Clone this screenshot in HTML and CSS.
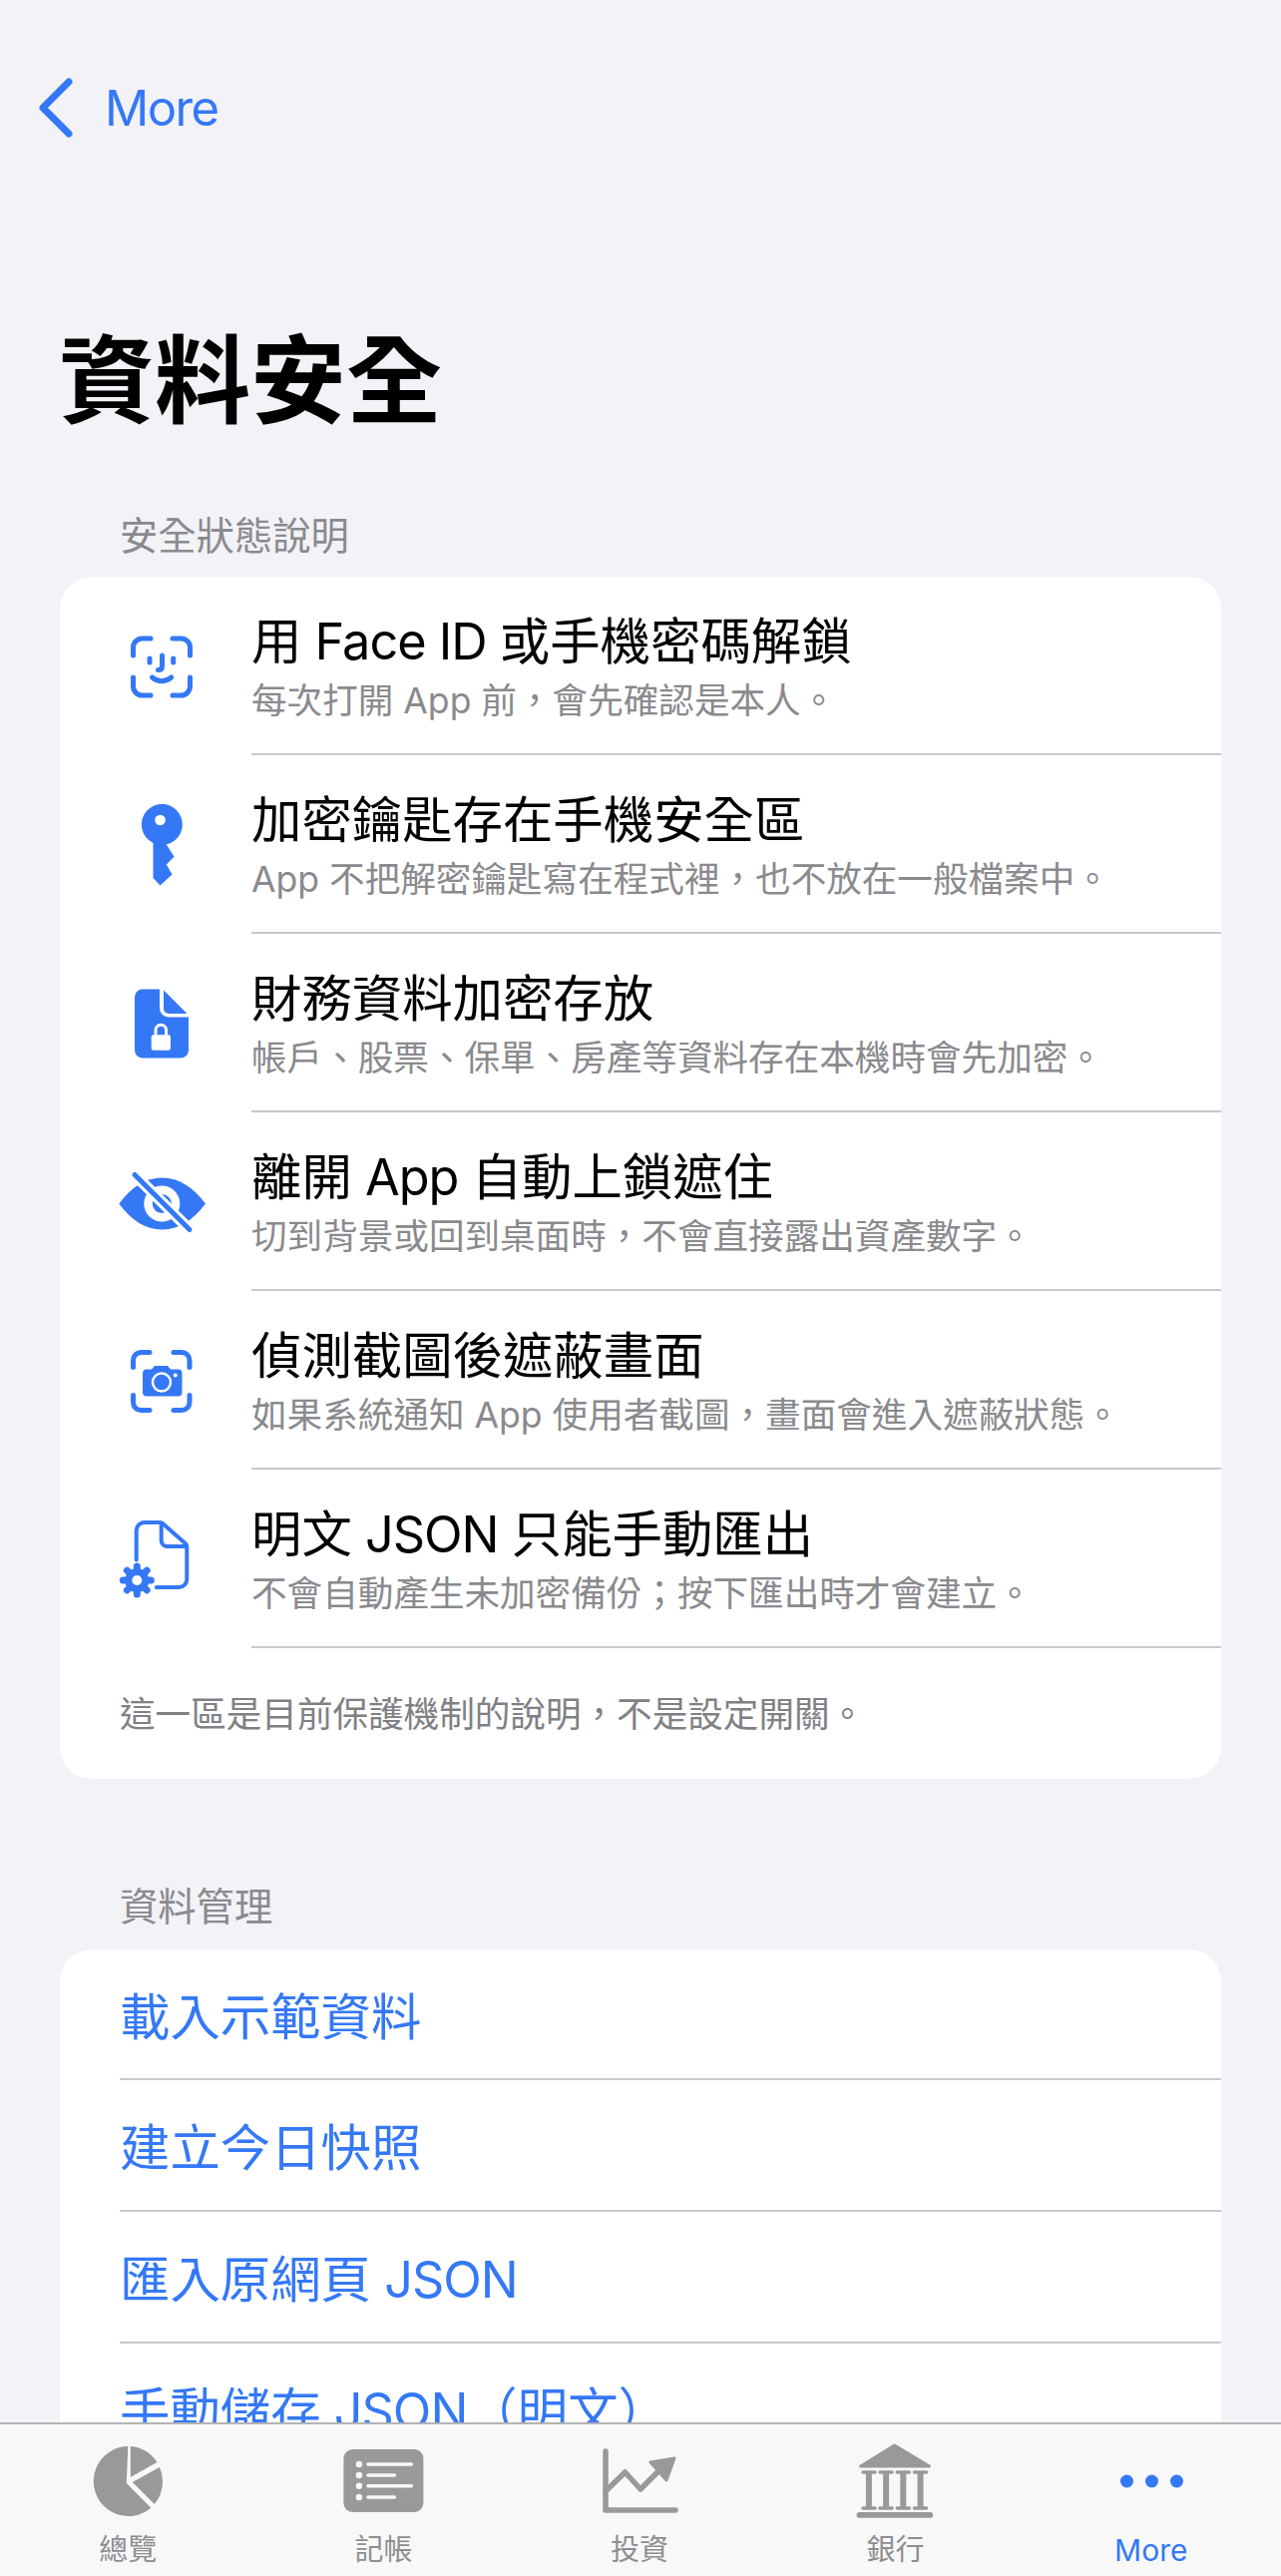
FILE: index.html
```html
<!DOCTYPE html>
<html lang="zh-Hant">
<head>
    <meta charset="UTF-8">
    <meta name="viewport" content="width=device-width, initial-scale=1.0">
    <title>資料安全</title>
    <link rel="stylesheet" href="styles.css">
</head>
<body>
    <main class="content">
        <nav class="nav">
            <svg class="nav-chevron" viewBox="0 0 40 64"><path d="M34 6 L8 32 L34 58"/></svg>
            <span class="nav-back">More</span>
        </nav>

        <h1 class="page-title">資料安全</h1>

        <h2 class="section-title">安全狀態說明</h2>
        <section class="card">
            <div class="status-row">
                <svg class="status-icon" viewBox="0 0 120 120">
                    <g class="line">
                        <path d="M31.5 49 V41 a9 9 0 0 1 9 -9 H49"/>
                        <path d="M71 32 H79.5 a9 9 0 0 1 9 9 V49"/>
                        <path d="M31.5 71 V80 a9 9 0 0 0 9 9 H49"/>
                        <path d="M71 89 H79.5 a9 9 0 0 0 9 -9 V71"/>
                        <path d="M48 52 V56"/>
                        <path d="M71.7 52 V56"/>
                        <path d="M60.5 49 V60 c0 2.6 -1.4 3.6 -4 3.6"/>
                        <path d="M50.5 71 Q60 78.5 69.7 71"/>
                    </g>
                </svg>
                <div class="status-text">
                    <div class="status-name">用<span class="latin"> Face ID </span>或手機密碼解鎖</div>
                    <div class="status-desc">每次打開 App 前，會先確認是本人。</div>
                </div>
            </div>
            <div class="status-row">
                <svg class="status-icon" viewBox="1.5 0 120 120">
                    <path class="solid" d="M53 58 A20.5 20.5 0 1 1 66.3 59.5 L74 71.8 L66.3 79.5 L72 89.5 L60 100.5 L53 93 Z"/>
                    <circle class="hole" cx="60" cy="35" r="5.3"/>
                </svg>
                <div class="status-text">
                    <div class="status-name">加密鑰匙存在手機安全區</div>
                    <div class="status-desc">App 不把解密鑰匙寫在程式裡，也不放在一般檔案中。</div>
                </div>
            </div>
            <div class="status-row">
                <svg class="status-icon" viewBox="0 1.5 120 120">
                    <path class="solid" d="M41 27 H58 V46 a9 9 0 0 0 9 9 H87 V88 a8 8 0 0 1 -8 8 H41 a8 8 0 0 1 -8 -8 V35 a8 8 0 0 1 8 -8 Z"/>
                    <path class="solid" d="M62 28 L85.5 51.5 H67 a5 5 0 0 1 -5 -5 Z"/>
                    <rect class="hole" x="49.7" y="72.7" width="19.3" height="15.6" rx="2"/>
                    <path class="shackle" d="M54 73 V68 a5.3 5.3 0 0 1 10.6 0 V73"/>
                </svg>
                <div class="status-text">
                    <div class="status-name">財務資料加密存放</div>
                    <div class="status-desc">帳戶、股票、保單、房產等資料存在本機時會先加密。</div>
                </div>
            </div>
            <div class="status-row">
                <svg class="status-icon" viewBox="0 1.5 120 120">
                    <path class="solid" d="M17.3 63 C30 46 44 37 60.5 37 C77 37 91 46 104 63 C91 80 77 89 60.5 89 C44 89 30 80 17.3 63 Z"/>
                    <circle class="hole" cx="60.3" cy="63" r="18"/>
                    <circle class="solid" cx="60.3" cy="63" r="9.5"/>
                    <path class="slash-gap" d="M29 30 L92 93"/>
                    <path class="slash" d="M33 34 L88 89"/>
                </svg>
                <div class="status-text">
                    <div class="status-name">離開<span class="latin"> App </span>自動上鎖遮住</div>
                    <div class="status-desc">切到背景或回到桌面時，不會直接露出資產數字。</div>
                </div>
            </div>
            <div class="status-row">
                <svg class="status-icon" viewBox="0 1.5 120 120">
                    <g class="line">
                        <path d="M31.5 48 V41 a8 8 0 0 1 8 -8 H48"/>
                        <path d="M72 33 H80 a8 8 0 0 1 8 8 V48"/>
                        <path d="M31.5 76 V83 a8 8 0 0 0 8 8 H48"/>
                        <path d="M72 91 H80 a8 8 0 0 0 8 -8 V76"/>
                    </g>
                    <path class="solid" d="M45 50 H50 L53 46.5 H66 L69 50 H76.5 a4 4 0 0 1 4 4 V73 a4 4 0 0 1 -4 4 H45 a4 4 0 0 1 -4 -4 V54 a4 4 0 0 1 4 -4 Z"/>
                    <circle class="ring" cx="60" cy="63" r="9"/>
                    <circle class="hole" cx="73.7" cy="56" r="2"/>
                </svg>
                <div class="status-text">
                    <div class="status-name">偵測截圖後遮蔽畫面</div>
                    <div class="status-desc">如果系統通知 App 使用者截圖，畫面會進入遮蔽狀態。</div>
                </div>
            </div>
            <div class="status-row">
                <svg class="status-icon" viewBox="0 0 120 120">
                    <g class="line thin">
                        <path d="M34.7 60.5 V31 a8 8 0 0 1 8 -8 H58 a5 5 0 0 1 3.6 1.5 L83.7 44 a5 5 0 0 1 1.6 3.6 V80 a8 8 0 0 1 -8 8 H54.7"/>
                        <path d="M59.7 24 V41 a6 6 0 0 0 6 6 H85"/>
                    </g>
                    <g class="gear-teeth">
                        <path d="M35.3 67 V95"/>
                        <path d="M21.3 81 H49.3"/>
                        <path d="M25.4 71.1 L45.2 90.9"/>
                        <path d="M25.4 90.9 L45.2 71.1"/>
                    </g>
                    <circle class="solid" cx="35.3" cy="81" r="12"/>
                    <circle class="hole" cx="35.3" cy="81" r="5"/>
                </svg>
                <div class="status-text">
                    <div class="status-name">明文<span class="latin"> JSON </span>只能手動匯出</div>
                    <div class="status-desc">不會自動產生未加密備份；按下匯出時才會建立。</div>
                </div>
            </div>
            <p class="card-note">這一區是目前保護機制的說明，不是設定開關。</p>
        </section>

        <h2 class="section-title section-second">資料管理</h2>
        <section class="card">
            <div class="action-row">載入示範資料</div>
            <div class="action-row">建立今日快照</div>
            <div class="action-row">匯入原網頁<span class="latin"> JSON</span></div>
            <div class="action-row">手動儲存<span class="latin"> JSON</span>（明文）</div>
        </section>
    </main>

    <footer class="tabbar">
        <div class="tab">
            <svg class="tab-icon" viewBox="-10.8 0 100 80">
                <path d="M39.5 5 A35 35 0 1 0 62.5 66.8 L38 42 Z"/>
                <path d="M42 5 A35 35 0 0 1 68.6 21 L42 36 Z"/>
                <path d="M71 26 A35 35 0 0 1 66 63 L44 41 Z"/>
            </svg>
            <span>總覽</span>
        </div>
        <div class="tab">
            <svg class="tab-icon" viewBox="0 0 100 80">
                <rect x="9.4" y="8" width="80" height="63" rx="9"/>
                <g class="tab-list">
                    <path d="M33.9 23 H77.4"/>
                    <path d="M33.9 34 H60.4"/>
                    <path d="M33.9 44.7 H77.4"/>
                    <path d="M33.9 56 H60.4"/>
                </g>
                <g class="tab-dots">
                    <circle cx="24.9" cy="23" r="3.2"/>
                    <circle cx="24.9" cy="34" r="3.2"/>
                    <circle cx="24.9" cy="44.7" r="3.2"/>
                    <circle cx="24.9" cy="56" r="3.2"/>
                </g>
            </svg>
            <span>記帳</span>
        </div>
        <div class="tab">
            <svg class="tab-icon" viewBox="0 0 100 80">
                <path class="tab-line" d="M16 10 V69 H86"/>
                <path class="tab-line" d="M16 50 L35.5 31 L51 48 L70 29"/>
                <path class="tab-arrow" d="M85 17 L61 21 L77 39 Z"/>
            </svg>
            <span>投資</span>
        </div>
        <div class="tab">
            <svg class="tab-icon" viewBox="0 0 100 80">
                <path class="tab-arrow" d="M49.6 4 L15.6 25 H84.6 Z"/>
                <g class="tab-columns">
                    <path d="M23.9 31 V67"/>
                    <path d="M41.1 31 V67"/>
                    <path d="M58.3 31 V67"/>
                    <path d="M75.6 31 V67"/>
                </g>
                <g class="tab-caps">
                    <path d="M18 31 H30"/>
                    <path d="M35 31 H47"/>
                    <path d="M52.3 31 H64.3"/>
                    <path d="M69.6 31 H81.6"/>
                    <path d="M18 67 H30"/>
                    <path d="M35 67 H47"/>
                    <path d="M52.3 67 H64.3"/>
                    <path d="M69.6 67 H81.6"/>
                </g>
                <rect x="11.6" y="71" width="76.6" height="5.7" rx="2.8"/>
            </svg>
            <span>銀行</span>
        </div>
        <div class="tab tab-active">
            <svg class="tab-icon" viewBox="0 0 100 80">
                <circle cx="25.5" cy="40" r="6.5"/>
                <circle cx="50.5" cy="40" r="6.5"/>
                <circle cx="75.5" cy="40" r="6.5"/>
            </svg>
            <span class="tab-more">More</span>
        </div>
    </footer>
</body>
</html>
```

FILE: styles.css
```css
* {
    box-sizing: border-box;
}
body {
    margin: 0;
    height: 2582px;
    display: flex;
    flex-direction: column;
    overflow: hidden;
    background: #f2f2f7;
    color: #000;
    font-family: Inter, "Noto Sans CJK TC", sans-serif;
}
.content {
    flex: 1;
    min-height: 0;
    overflow: hidden;
    padding: 72px 60px 0;
}
.nav {
    display: flex;
    align-items: center;
    gap: 30px;
    height: 72px;
    margin-left: -25px;
    color: #3478f6;
}
.nav-chevron {
    width: 40px;
    height: 64px;
}
.nav-chevron path {
    fill: none;
    stroke: #3478f6;
    stroke-width: 7;
    stroke-linecap: round;
    stroke-linejoin: round;
}
.nav-back {
    font-size: 49px;
    letter-spacing: -1.6px;
}
.page-title {
    margin: 177px 0 71px -1px;
    font-size: 96px;
    line-height: 120px;
    font-weight: 700;
}
.section-title {
    margin: 0 0 16px 60px;
    font-size: 38.3px;
    line-height: 50px;
    font-weight: 400;
    color: #8a8a8e;
}
.section-second {
    margin-top: 103px;
    margin-bottom: 18px;
}
.card {
    background: #fff;
    border-radius: 32px;
    overflow: hidden;
}
.latin {
    letter-spacing: -1px;
}
.status-row {
    display: flex;
    align-items: center;
    height: 179px;
}
.status-icon {
    flex: none;
    width: 120px;
    height: 120px;
    margin: 0 30px 0 42px;
}
.status-text {
    flex: 1;
    height: 100%;
    padding-top: 35px;
    border-bottom: 2px solid #c9c9cb;
}
.status-name {
    font-size: 50.4px;
    line-height: 60px;
}
.status-desc {
    margin-top: 5px;
    font-size: 35.6px;
    line-height: 50px;
    color: #8a8a8e;
}
.card-note {
    margin: 0;
    height: 131px;
    padding: 42px 60px 0;
    font-size: 35.6px;
    line-height: 50px;
    color: #808084;
}
.action-row {
    height: 132px;
    margin-left: 60px;
    padding-top: 38px;
    font-size: 50.4px;
    line-height: 60px;
    color: #3478f6;
    border-bottom: 2px solid #c9c9cb;
}
.action-row:first-child {
    height: 131px;
}
.solid {
    fill: #3478f6;
    stroke-linejoin: round;
}
.hole {
    fill: #fff;
}
.line {
    fill: none;
    stroke: #3478f6;
    stroke-width: 5;
    stroke-linecap: round;
    stroke-linejoin: round;
}
.line.thin {
    stroke-width: 4;
}
.shackle {
    fill: none;
    stroke: #fff;
    stroke-width: 3;
}
.ring {
    fill: none;
    stroke: #fff;
    stroke-width: 2.4;
}
.slash-gap {
    fill: none;
    stroke: #fff;
    stroke-width: 11;
}
.slash {
    fill: none;
    stroke: #3478f6;
    stroke-width: 5;
    stroke-linecap: round;
}
.gear-teeth {
    fill: none;
    stroke: #3478f6;
    stroke-width: 7;
    stroke-linecap: round;
}
.tabbar {
    flex: none;
    display: grid;
    grid-template-columns: repeat(5, 1fr);
    height: 154px;
    padding: 17px 2px 0 0;
    background: #f8f8f8;
    border-top: 2px solid #b4b4b4;
}
.tab {
    display: flex;
    flex-direction: column;
    align-items: center;
    font-size: 29px;
    line-height: 36px;
    color: #8e8e90;
}
.tab-icon {
    width: 100px;
    height: 80px;
    margin-bottom: 11px;
    fill: #999;
}
.tab-active {
    color: #3478f6;
}
.tab-active .tab-icon {
    fill: #3478f6;
}
.tab-more {
    font-size: 30px;
}
.tab-list,
.tab-columns,
.tab-caps,
.tab-line {
    fill: none;
    stroke: #999;
}
.tab-list {
    stroke: #f8f8f8;
    stroke-width: 3.4;
    stroke-linecap: round;
}
.tab-dots {
    fill: #f8f8f8;
}
.tab-line {
    stroke-width: 5.5;
    stroke-linecap: round;
    stroke-linejoin: round;
}
.tab-arrow {
    stroke: #999;
    stroke-width: 3;
    stroke-linejoin: round;
}
.tab-columns {
    stroke-width: 6;
}
.tab-caps {
    stroke-width: 3.6;
    stroke-linecap: round;
}
```
